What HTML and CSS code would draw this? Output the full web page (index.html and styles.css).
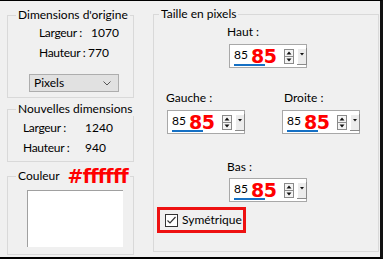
FILE: index.html
```html
<!DOCTYPE html>
<html lang="fr">
<head>
<meta charset="utf-8">
<title>Ajouter des bordures</title>
<link rel="stylesheet" href="styles.css">
</head>
<body>
<div class="dlg">
  <div class="left">
    <fieldset class="grp g1">
      <legend>Dimensions d'origine</legend>
      <div class="row r1"><span class="lbl l1">Largeur :</span><span class="val">1070</span></div>
      <div class="row r2"><span class="lbl l2">Hauteur :</span><span class="val">770</span></div>
      <div class="select"><span>Pixels</span><svg width="8" height="5" viewBox="0 0 8 5"><path d="M0.5 0.5 L4 4 L7.5 0.5" fill="none" stroke="#555" stroke-width="1"/></svg></div>
    </fieldset>
    <fieldset class="grp g2">
      <legend>Nouvelles dimensions</legend>
      <div class="row r3"><span class="lbl l3">Largeur :</span><span class="val">1240</span></div>
      <div class="row r4"><span class="lbl l3">Hauteur :</span><span class="val">940</span></div>
    </fieldset>
    <fieldset class="grp g3">
      <legend>Couleur <span class="hex">#ffffff</span></legend>
      <div class="swatch"></div>
    </fieldset>
  </div>
  <fieldset class="grp right">
    <legend>Taille en pixels</legend>
    <div class="field f-top">
      <div class="flabel">Haut :</div>
      <div class="spin"><span class="edit">85</span><span class="big">85</span>
        <svg class="arrows" width="10" height="15" viewBox="0 0 10 15"><rect x="0.5" y="0.5" width="9" height="7" fill="#f4f4f4" stroke="#8a8a8a"/><rect x="0.5" y="7.5" width="9" height="7" fill="#f4f4f4" stroke="#8a8a8a"/><path d="M2.5 5.5 L5 2.5 L7.5 5.5 Z" fill="#111"/><path d="M2.5 9.5 L5 12.5 L7.5 9.5 Z" fill="#111"/></svg>
        <svg class="drop" width="10" height="17" viewBox="0 0 10 17"><rect x="0" y="0" width="10" height="17" fill="#8a8a8a"/><rect x="0" y="0" width="9" height="16" fill="#fff"/><rect x="1" y="1" width="8" height="15" fill="#ececec"/><path d="M3 5 L7 5 L5 7.5 Z" fill="#111"/></svg>
      </div>
    </div>
    <div class="mid">
      <div class="field f-left">
        <div class="flabel">Gauche :</div>
        <div class="spin"><span class="edit">85</span><span class="big">85</span>
          <svg class="arrows" width="10" height="15" viewBox="0 0 10 15"><rect x="0.5" y="0.5" width="9" height="7" fill="#f4f4f4" stroke="#8a8a8a"/><rect x="0.5" y="7.5" width="9" height="7" fill="#f4f4f4" stroke="#8a8a8a"/><path d="M2.5 5.5 L5 2.5 L7.5 5.5 Z" fill="#111"/><path d="M2.5 9.5 L5 12.5 L7.5 9.5 Z" fill="#111"/></svg>
          <svg class="drop" width="10" height="17" viewBox="0 0 10 17"><rect x="0" y="0" width="10" height="17" fill="#8a8a8a"/><rect x="0" y="0" width="9" height="16" fill="#fff"/><rect x="1" y="1" width="8" height="15" fill="#ececec"/><path d="M3 5 L7 5 L5 7.5 Z" fill="#111"/></svg>
        </div>
      </div>
      <div class="field f-right">
        <div class="flabel">Droite :</div>
        <div class="spin"><span class="edit">85</span><span class="big">85</span>
          <svg class="arrows" width="10" height="15" viewBox="0 0 10 15"><rect x="0.5" y="0.5" width="9" height="7" fill="#f4f4f4" stroke="#8a8a8a"/><rect x="0.5" y="7.5" width="9" height="7" fill="#f4f4f4" stroke="#8a8a8a"/><path d="M2.5 5.5 L5 2.5 L7.5 5.5 Z" fill="#111"/><path d="M2.5 9.5 L5 12.5 L7.5 9.5 Z" fill="#111"/></svg>
          <svg class="drop" width="10" height="17" viewBox="0 0 10 17"><rect x="0" y="0" width="10" height="17" fill="#8a8a8a"/><rect x="0" y="0" width="9" height="16" fill="#fff"/><rect x="1" y="1" width="8" height="15" fill="#ececec"/><path d="M3 5 L7 5 L5 7.5 Z" fill="#111"/></svg>
        </div>
      </div>
    </div>
    <div class="field f-bottom">
      <div class="flabel">Bas :</div>
      <div class="spin"><span class="edit">85</span><span class="big">85</span>
        <svg class="arrows" width="10" height="15" viewBox="0 0 10 15"><rect x="0.5" y="0.5" width="9" height="7" fill="#f4f4f4" stroke="#8a8a8a"/><rect x="0.5" y="7.5" width="9" height="7" fill="#f4f4f4" stroke="#8a8a8a"/><path d="M2.5 5.5 L5 2.5 L7.5 5.5 Z" fill="#111"/><path d="M2.5 9.5 L5 12.5 L7.5 9.5 Z" fill="#111"/></svg>
        <svg class="drop" width="10" height="17" viewBox="0 0 10 17"><rect x="0" y="0" width="10" height="17" fill="#8a8a8a"/><rect x="0" y="0" width="9" height="16" fill="#fff"/><rect x="1" y="1" width="8" height="15" fill="#ececec"/><path d="M3 5 L7 5 L5 7.5 Z" fill="#111"/></svg>
      </div>
    </div>
    <div class="sym">
      <span class="check"><svg width="13" height="13" viewBox="0 0 13 13"><rect x="0.5" y="0.5" width="12" height="12" fill="#fff" stroke="#333"/><path d="M2.5 6.5 L5 9 L10.5 3" fill="none" stroke="#333" stroke-width="1.2"/></svg></span>
      <span class="symlbl">Symétrique</span>
    </div>
  </fieldset>
</div>
</body>
</html>
```
FILE: styles.css
```css
html, body {
  margin: 0;
  padding: 0;
  background: #f0f0f0;
}
body {
  font-family: "Lato", "Noto Sans", sans-serif;
  font-size: 12px;
  color: #000;
}
.dlg {
  width: 383px;
  height: 259px;
  box-sizing: border-box;
  border-top: 1px solid #000;
  border-right: 3px solid #111;
  border-bottom: 2px solid #000;
  display: flex;
  align-items: flex-start;
  padding-left: 7px;
  background: #f0f0f0;
  overflow: hidden;
}
.left {
  width: 127px;
  display: flex;
  flex-direction: column;
}
.grp {
  margin: 0;
  padding: 0;
  min-width: 0;
  box-sizing: border-box;
  border: 1px solid #d9d9d9;
}
.grp legend {
  padding: 0 2px;
  margin-left: 8px;
  line-height: 14px;
  height: 14px;
  white-space: nowrap;
}
.g1 { margin-top: 7px; height: 90px; }
.g2 { margin-top: 4px; height: 60px; }
.g3 { margin-top: 7px; height: 86px; }
.row {
  display: flex;
  line-height: 16px;
  height: 16px;
  white-space: nowrap;
}
.r1 { margin-top: 3px; padding-left: 31px; }
.r2 { margin-top: 4px; padding-left: 31px; }
.r3 { margin-top: 4px; padding-left: 15px; }
.r4 { margin-top: 4px; padding-left: 15px; }
.lbl {
  flex: none;
  white-space: nowrap;
  letter-spacing: -0.3px;
}
.l1 { width: 52px; }
.l2 { width: 49px; }
.l3 { width: 62px; }
.val { flex: none; }
.select {
  margin: 13px 0 0 21px;
  width: 90px;
  height: 18px;
  box-sizing: border-box;
  border: 1px solid #adadad;
  background: #e1e1e1;
  display: flex;
  align-items: center;
  justify-content: space-between;
  padding: 0 7px 0 4px;
  line-height: 16px;
}
.hex {
  color: #ff0000;
  font-family: "DejaVu Sans", sans-serif;
  font-weight: bold;
  font-size: 19px;
  letter-spacing: -0.7px;
  line-height: 14px;
  margin-left: 5px;
  vertical-align: top;
}
.swatch {
  margin: 7px 0 0 19px;
  width: 96px;
  height: 57px;
  box-sizing: border-box;
  background: #fff;
  border-top: 1px solid #a0a0a0;
  border-left: 1px solid #a0a0a0;
}
.right {
  margin-left: 19px;
  margin-top: 6px;
  width: 226px;
  height: 245px;
}
.right legend { margin-left: 5px; }
.field .flabel {
  line-height: 16px;
  height: 16px;
  white-space: nowrap;
}
.spin {
  display: flex;
  align-items: center;
  width: 78px;
  height: 24px;
  box-sizing: border-box;
  border: 1px solid #a8a8a8;
  background: #fff;
}
.edit {
  margin-left: 4px;
  width: 31px;
  height: 18px;
  line-height: 18px;
  border-bottom: 2px solid #1570c4;
  flex: none;
}
.big {
  margin-left: -14px;
  color: #ff0000;
  font-family: "DejaVu Sans", sans-serif;
  font-weight: bold;
  font-size: 19px;
  line-height: 20px;
  letter-spacing: -0.5px;
  width: 30px;
  flex: none;
}
.arrows { margin-left: 3px; flex: none; }
.drop { margin-left: 3px; flex: none; align-self: flex-start; margin-top: 3px; }
.f-top { margin: 3px 0 0 73px; }
.f-top .spin, .f-bottom .spin { margin-left: 2px; margin-top: 4px; }
.mid {
  display: flex;
  margin-top: 22px;
}
.f-left { margin-left: 12px; }
.f-right { margin-left: 39px; }
.f-left .spin { margin-left: 1px; margin-top: 4px; }
.f-right .spin { margin-left: -2px; margin-top: 4px; }
.f-bottom { margin: 25px 0 0 73px; }
.f-bottom .spin { margin-top: 3px; }
.sym {
  margin: 5px 0 0 3px;
  width: 89px;
  height: 26px;
  box-sizing: border-box;
  border: 3px solid #ee1111;
  display: flex;
  align-items: center;
  padding-left: 5px;
}
.check { display: flex; width: 13px; height: 13px; }
.symlbl { margin-left: 4px; line-height: 16px; }
```
